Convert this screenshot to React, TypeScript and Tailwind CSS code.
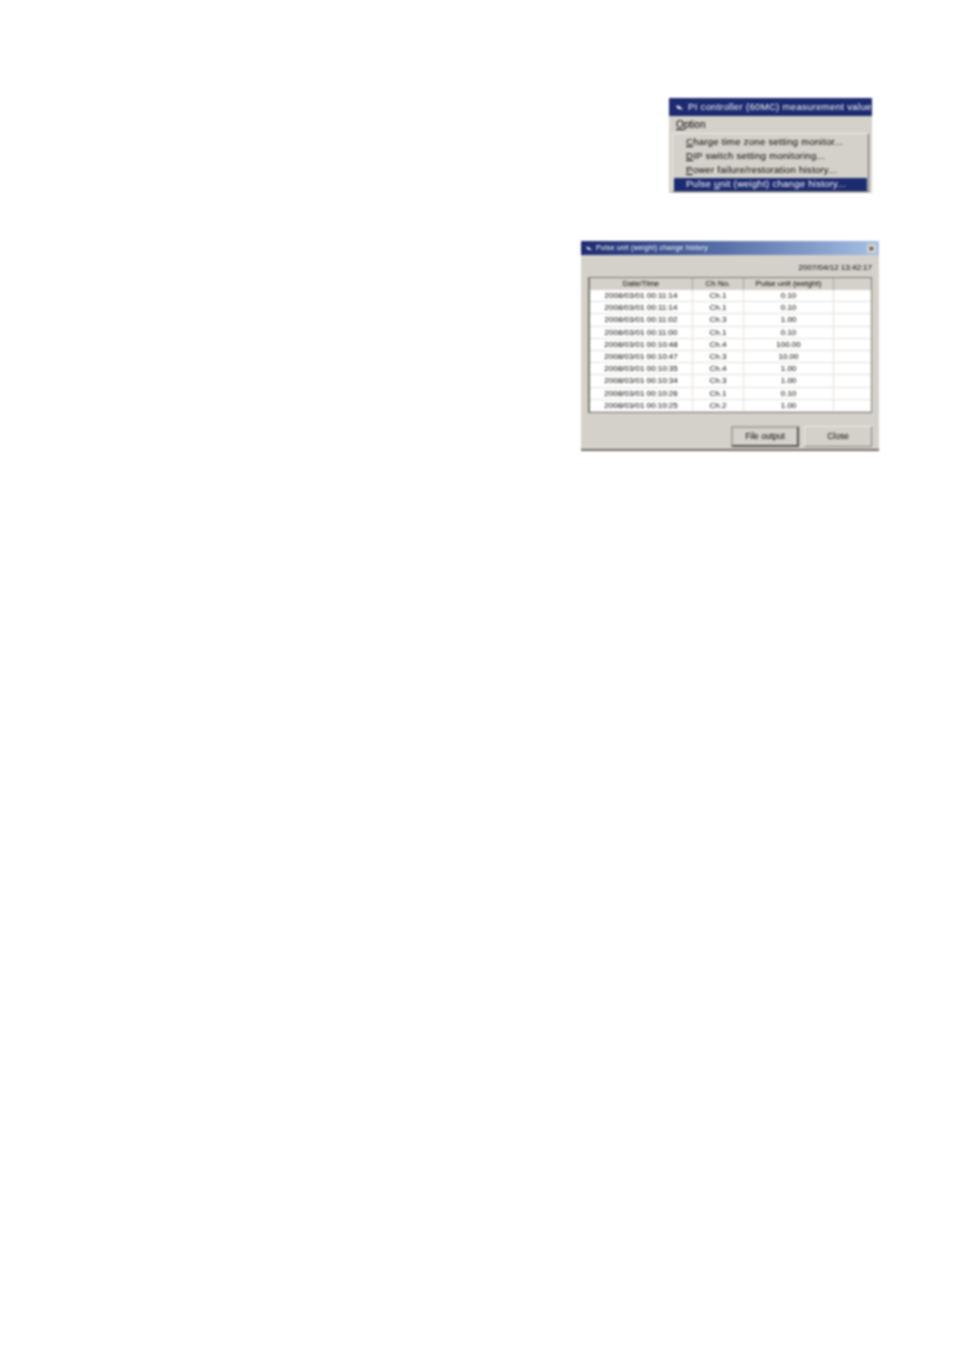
const rows = [
  ['2008/03/01 00:11:14', 'Ch.1', '0.10'],
  ['2008/03/01 00:11:14', 'Ch.1', '0.10'],
  ['2008/03/01 00:11:02', 'Ch.3', '1.00'],
  ['2008/03/01 00:11:00', 'Ch.1', '0.10'],
  ['2008/03/01 00:10:48', 'Ch.4', '100.00'],
  ['2008/03/01 00:10:47', 'Ch.3', '10.00'],
  ['2008/03/01 00:10:35', 'Ch.4', '1.00'],
  ['2008/03/01 00:10:34', 'Ch.3', '1.00'],
  ['2008/03/01 00:10:26', 'Ch.1', '0.10'],
  ['2008/03/01 00:10:25', 'Ch.2', '1.00'],
];

const menuItems = [
  ['C', 'harge time zone setting monitor...'],
  ['D', 'IP switch setting monitoring...'],
  ['P', 'ower failure/restoration history...'],
];

function TitleIcon({ className = '' }: { className?: string }) {
  return (
    <svg viewBox="0 0 10 8" className={className}>
      <path d="M1 2 L5 3 L9 7 L3 6 Z" fill="#e8e8e8" />
    </svg>
  );
}

function MenuWindow() {
  return (
    <div className="ml-[669px] w-[203px] h-[95px] bg-[#d4d1ca] overflow-hidden blur-[0.8px] font-['Liberation_Sans',sans-serif]">
      {/* Title bar */}
      <div className="h-[18px] bg-[#1c2b70] flex items-center pl-[6px] gap-[4px] text-[9.5px] tracking-[0.33px] text-white whitespace-nowrap">
        <TitleIcon className="w-[9px] h-[8px] shrink-0" />
        <span>PI controller (60MC) measurement value</span>
      </div>

      {/* Menu bar */}
      <div className="h-[17px] flex items-center pl-[7px] text-[10px] text-black">
        <span>
          <span className="underline">O</span>ption
        </span>
      </div>

      {/* Dropdown */}
      <div className="ml-[3px] w-[197px] h-[59px] border-r border-b border-[#666] border-l border-l-[#ecebe6] border-t border-t-[#ecebe6] pt-[1px] px-[1px] text-[9.5px] tracking-[0.28px] text-black whitespace-nowrap">
        {menuItems.map(([key, rest]) => (
          <div key={key} className="h-[14px] pl-[12px] flex items-center">
            <span>
              <span className="underline">{key}</span>
              {rest}
            </span>
          </div>
        ))}
        <div className="mt-[1px] h-[13px] pl-[12px] bg-[#1c2b70] text-white flex items-center">
          <span>
            Pulse <span className="underline">u</span>nit (weight) change history...
          </span>
        </div>
      </div>
    </div>
  );
}

function HistoryWindow() {
  return (
    <div className="mt-[48px] ml-[581px] w-[298px] h-[210px] bg-[#d4d1ca] border-b-2 border-b-[#6f6d67] flex flex-col blur-[0.8px] font-['Liberation_Sans',sans-serif] text-black">
      {/* Title bar */}
      <div className="h-[14px] shrink-0 bg-gradient-to-r from-[#1c2b70] to-[#a6c0e4] flex items-center pl-[4px] pr-[3px] gap-[3px] text-[7px] tracking-[0.2px] text-white">
        <TitleIcon className="w-[8px] h-[6px] shrink-0" />
        <span className="flex-1">Pulse unit (weight) change history</span>
        <span className="w-[9px] h-[9px] bg-[#d4d0c8] text-black text-[8px] leading-[9px] text-center font-bold">×</span>
      </div>

      {/* Timestamp */}
      <div className="h-[22px] shrink-0 flex items-end justify-end pr-[7px] pb-[3px] text-[8px]">
        2007/04/12 13:42:17
      </div>

      {/* Table */}
      <div className="mx-[7px] w-[284px] h-[136px] shrink-0 border-t border-l-2 border-b-2 border-r border-[#7a7872] text-[8px] text-center">
        <div className="grid grid-cols-[103px_51px_90px_1fr] h-[12px] leading-[11px]">
          <div className="border-r border-[#aaa79f]">Date/Time</div>
          <div className="border-r border-[#aaa79f]">Ch No.</div>
          <div className="border-r border-[#aaa79f]">Pulse unit (weight)</div>
          <div />
        </div>
        {rows.map((row, i) => (
          <div
            key={i}
            className="grid grid-cols-[103px_51px_90px_1fr] h-[12.2px] leading-[12px] bg-white border-b border-[#e3e1da]"
          >
            <div className="border-r border-[#e3e1da]">{row[0]}</div>
            <div className="border-r border-[#e3e1da]">{row[1]}</div>
            <div className="border-r border-[#e3e1da]">{row[2]}</div>
            <div />
          </div>
        ))}
      </div>

      {/* Buttons */}
      <div className="mt-[13px] mr-[7px] flex justify-end gap-[5px] text-[8.5px]">
        <button className="w-[68px] h-[21px] border-2 border-t-[#aaa79f] border-l-[#aaa79f] border-r-[#55534f] border-b-[#55534f]">
          File output
        </button>
        <button className="w-[68px] h-[21px] border border-t-[#eceae4] border-l-[#eceae4] border-r-[#85837d] border-b-[#85837d]">
          Close
        </button>
      </div>
    </div>
  );
}

export default function App() {
  return (
    <div className="w-[954px] h-[1351px] bg-white pt-[98px] overflow-hidden">
      <MenuWindow />
      <HistoryWindow />
    </div>
  );
}
